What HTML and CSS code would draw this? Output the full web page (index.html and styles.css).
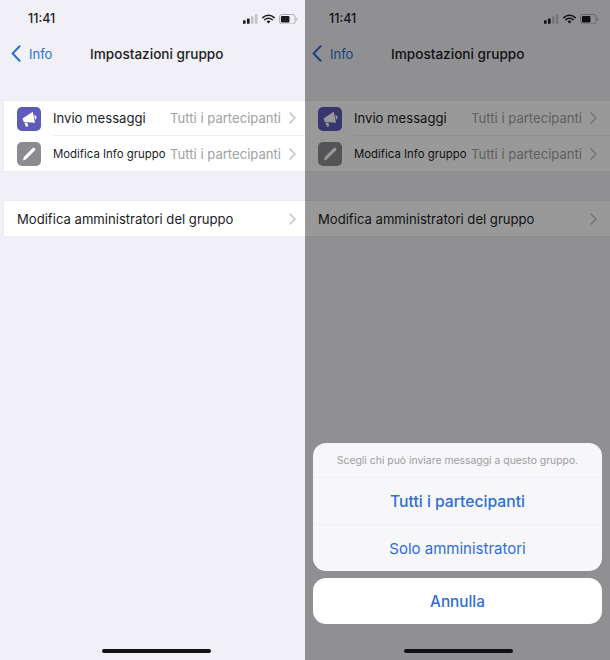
FILE: index.html
```html
<!DOCTYPE html>
<html lang="en">
<head>
    <meta charset="UTF-8">
    <meta name="viewport" content="width=device-width, initial-scale=1.0">
    <title>Impostazioni gruppo</title>
    <link rel="stylesheet" href="styles.css">
</head>
<body>
    <svg class="sprites" width="0" height="0">
        <symbol id="signal" viewBox="0 0 17 11">
            <rect x="0" y="7" width="3" height="4" rx="0.7" fill="#1c1c1e"/>
            <rect x="4.5" y="5" width="3" height="6" rx="0.7" fill="#1c1c1e"/>
            <rect x="9" y="2.5" width="3" height="8.5" rx="0.7" fill="#c4c4c8"/>
            <rect x="13.5" y="0" width="3" height="11" rx="0.7" fill="#c4c4c8"/>
        </symbol>
        <symbol id="wifi" viewBox="0 0 16 12">
            <path d="M1 4.3a10 10 0 0 1 14 0M3.4 6.9a6.6 6.6 0 0 1 9.2 0" fill="none" stroke="#1c1c1e" stroke-width="1.8" stroke-linecap="round"/>
            <path d="M5.6 9.1a3.4 3.4 0 0 1 4.8 0L8 11.6z" fill="#1c1c1e"/>
        </symbol>
        <symbol id="battery" viewBox="0 0 20 11">
            <rect x="0.5" y="0.5" width="16.5" height="10" rx="2.6" fill="none" stroke="#a9a9ad"/>
            <rect x="2" y="2" width="9" height="7" rx="1.2" fill="#1c1c1e"/>
            <path d="M18.2 3.8c.9.3 1.3 1 1.3 1.7s-.4 1.4-1.3 1.7z" fill="#a9a9ad"/>
        </symbol>
        <symbol id="back" viewBox="0 0 10 17">
            <path d="M8.6 1.2 1.6 8.5l7 7.3" fill="none" stroke="currentColor" stroke-width="2" stroke-linecap="round" stroke-linejoin="round"/>
        </symbol>
        <symbol id="chevron" viewBox="0 0 7 12">
            <path d="M1 1l5 5-5 5" fill="none" stroke="#c2c2c7" stroke-width="1.5" stroke-linecap="round" stroke-linejoin="round"/>
        </symbol>
        <symbol id="megaphone" viewBox="0 0 24 24">
            <path d="M5.500 11.400 15.800 4.800 18 15.800 6.800 15z" fill="#fff"/>
            <path d="M17.300 8c1.300.2 2.100 1.200 2.200 2.300.1 1.100-.6 2.100-1.500 2.500z" fill="#fff"/>
            <path d="M7.400 15.400 10.200 15.700 11.400 19.200 8.900 19.700z" fill="#fff"/>
        </symbol>
        <symbol id="pencil" viewBox="0 0 24 24">
            <path d="M6 18.400 6.900 15 15.800 6.100a1.300 1.300 0 0 1 1.800 0l.4.400a1.300 1.300 0 0 1 0 1.800L9.100 17.200z" fill="#fff"/>
        </symbol>
    </svg>

    <div class="screens">
        <section class="pane pane-left">
            <div class="status">
                <span class="time">11:41</span>
                <span class="status-icons">
                    <svg class="ic-signal"><use href="#signal"/></svg>
                    <svg class="ic-wifi"><use href="#wifi"/></svg>
                    <svg class="ic-battery"><use href="#battery"/></svg>
                </span>
            </div>
            <div class="nav">
                <svg class="ic-back"><use href="#back"/></svg>
                <span class="nav-back">Info</span>
                <span class="nav-title">Impostazioni gruppo</span>
            </div>
            <div class="group">
                <div class="row">
                    <span class="icon icon-purple"><svg><use href="#megaphone"/></svg></span>
                    <div class="row-body">
                        <span class="label">Invio messaggi</span>
                        <span class="value">Tutti i partecipanti</span>
                        <svg class="ic-chevron"><use href="#chevron"/></svg>
                    </div>
                </div>
                <div class="row">
                    <span class="icon icon-gray"><svg><use href="#pencil"/></svg></span>
                    <div class="row-body">
                        <span class="label label-small">Modifica Info gruppo</span>
                        <span class="value">Tutti i partecipanti</span>
                        <svg class="ic-chevron"><use href="#chevron"/></svg>
                    </div>
                </div>
            </div>
            <div class="group group-single">
                <div class="row row-plain">
                    <span class="label">Modifica amministratori del gruppo</span>
                    <svg class="ic-chevron"><use href="#chevron"/></svg>
                </div>
            </div>
            <div class="home-bar"></div>
        </section>

        <section class="pane pane-right">
            <div class="status">
                <span class="time">11:41</span>
                <span class="status-icons">
                    <svg class="ic-signal"><use href="#signal"/></svg>
                    <svg class="ic-wifi"><use href="#wifi"/></svg>
                    <svg class="ic-battery"><use href="#battery"/></svg>
                </span>
            </div>
            <div class="nav">
                <svg class="ic-back"><use href="#back"/></svg>
                <span class="nav-back">Info</span>
                <span class="nav-title">Impostazioni gruppo</span>
            </div>
            <div class="group">
                <div class="row">
                    <span class="icon icon-purple"><svg><use href="#megaphone"/></svg></span>
                    <div class="row-body">
                        <span class="label">Invio messaggi</span>
                        <span class="value">Tutti i partecipanti</span>
                        <svg class="ic-chevron"><use href="#chevron"/></svg>
                    </div>
                </div>
                <div class="row">
                    <span class="icon icon-gray"><svg><use href="#pencil"/></svg></span>
                    <div class="row-body">
                        <span class="label label-small">Modifica Info gruppo</span>
                        <span class="value">Tutti i partecipanti</span>
                        <svg class="ic-chevron"><use href="#chevron"/></svg>
                    </div>
                </div>
            </div>
            <div class="group group-single">
                <div class="row row-plain">
                    <span class="label">Modifica amministratori del gruppo</span>
                    <svg class="ic-chevron"><use href="#chevron"/></svg>
                </div>
            </div>

            <div class="overlay"></div>

            <div class="sheet">
                <div class="sheet-options">
                    <div class="sheet-title">Scegli chi può inviare messaggi a questo gruppo.</div>
                    <div class="sheet-option sheet-option-bold">Tutti i partecipanti</div>
                    <div class="sheet-option">Solo amministratori</div>
                </div>
                <div class="sheet-cancel">Annulla</div>
            </div>
            <div class="home-bar home-bar-top"></div>
        </section>
    </div>
</body>
</html>
```

FILE: styles.css
```css
* {
    box-sizing: border-box;
}
html, body {
    margin: 0;
    padding: 0;
}
body {
    width: 610px;
    height: 660px;
    overflow: hidden;
    font-family: Inter, "Liberation Sans", sans-serif;
    color: #1c1c1e;
}
.sprites {
    position: absolute;
}
.screens {
    display: flex;
    height: 660px;
}
.pane {
    position: relative;
    width: 305px;
    height: 660px;
    overflow: hidden;
    background-color: #f0f0f6;
}
.pane-left {
    padding-left: 4px;
}
.status {
    display: flex;
    align-items: center;
    justify-content: space-between;
    height: 38px;
    padding: 0 0 0 24px;
}
.time {
    font-size: 12.5px;
    font-weight: 500;
    line-height: 38px;
}
.status-icons {
    display: flex;
    align-items: center;
    gap: 4px;
    width: 60px;
    margin-right: 6px;
}
.pane-left .status-icons {
    margin-right: 2px;
}
.ic-signal {
    width: 15px;
    height: 10px;
}
.ic-wifi {
    width: 13px;
    height: 10px;
}
.ic-battery {
    width: 19px;
    height: 10.5px;
}
.nav {
    display: flex;
    align-items: center;
    height: 31px;
    color: #2f6fd0;
}
.ic-back {
    width: 10px;
    height: 17px;
    margin-left: 7px;
}
.nav-back {
    margin-left: 8px;
    font-size: 13px;
    width: 61px;
}
.nav-title {
    color: #1c1c1e;
    font-size: 13.6px;
    font-weight: 450;
}
.group {
    margin-top: 32px;
    background-color: #fff;
    box-shadow: 0 0 0 0.5px #e8e8ed;
}
.group-single {
    margin-top: 30px;
}
.row {
    display: flex;
    align-items: center;
    height: 35px;
    padding-left: 13px;
}
.row-plain {
    justify-content: space-between;
    padding-right: 9px;
}
.pane-right .row-plain {
    padding-right: 13px;
}
.icon {
    display: flex;
    flex-shrink: 0;
    width: 24px;
    height: 24px;
    border-radius: 5px;
}
.icon svg {
    width: 24px;
    height: 24px;
}
.icon-purple {
    background-color: #5e5bb8;
}
.icon-gray {
    background-color: #8c8c90;
}
.row-body {
    display: flex;
    align-items: center;
    flex: 1;
    height: 100%;
    margin-left: 12px;
    padding-right: 9px;
}
.pane-right .row-body {
    padding-right: 13px;
}
.row:first-child .row-body {
    border-bottom: 1px solid #f0f0f3;
}
.label {
    font-size: 13.1px;
    white-space: nowrap;
}
.label-small {
    font-size: 11.4px;
}
.value {
    margin-left: auto;
    color: #a0a0a5;
    font-size: 13.1px;
    white-space: nowrap;
}
.ic-chevron {
    flex-shrink: 0;
    width: 7px;
    height: 12px;
    margin-left: 8px;
}
.overlay {
    position: absolute;
    top: 0;
    right: 0;
    bottom: 0;
    left: 0;
    background-color: rgba(0, 0, 0, 0.4);
}
.sheet {
    position: absolute;
    left: 8px;
    right: 8px;
    top: 443px;
    display: flex;
    flex-direction: column;
    gap: 7px;
    text-align: center;
    color: #2f6ed6;
}
.sheet-options {
    background-color: #f7f7f9;
    border-radius: 13px;
}
.sheet-title {
    height: 35px;
    padding-top: 11px;
    color: #9c9ca0;
    font-size: 10.4px;
    border-bottom: 1px solid #f0f0f2;
}
.sheet-option {
    height: 46.5px;
    padding-top: 1px;
    font-size: 15px;
    line-height: 46.5px;
}
.sheet-option-bold {
    font-size: 15.7px;
    font-weight: 500;
    border-bottom: 1px solid #f0f0f2;
}
.sheet-cancel {
    height: 46px;
    padding-top: 1px;
    background-color: #fff;
    border-radius: 13px;
    font-size: 15.3px;
    font-weight: 500;
    line-height: 46px;
}
.home-bar {
    position: absolute;
    bottom: 7px;
    left: 102px;
    width: 109px;
    height: 4px;
    border-radius: 2px;
    background-color: #111114;
}
.home-bar-top {
    left: 99px;
}
```
